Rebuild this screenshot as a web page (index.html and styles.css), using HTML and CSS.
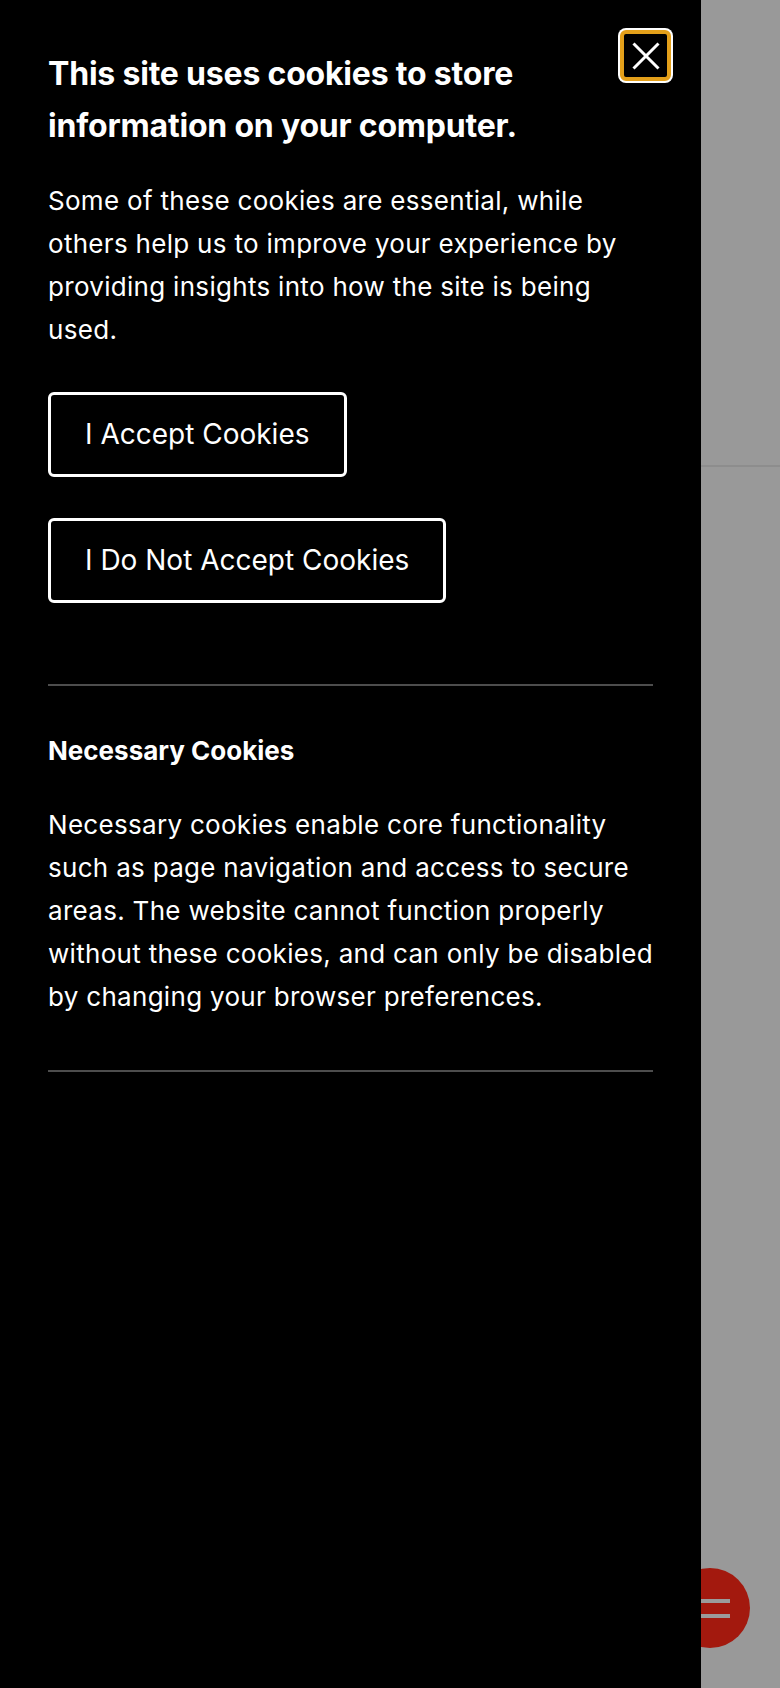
FILE: index.html
```html
<!DOCTYPE html>
<html lang="en">
<head>
<meta charset="utf-8">
<title>Cookies</title>
<link rel="stylesheet" href="styles.css">
</head>
<body>
<div class="page">
  <div class="page-rule"></div>
</div>
<button class="fab" aria-label="Menu">
  <span class="fab-line"></span>
  <span class="fab-line"></span>
</button>
<aside class="drawer">
  <button class="close" aria-label="Close">
    <svg viewBox="0 0 28 28" width="28" height="28"><path d="M1.5 1.5 L26.5 26.5 M26.5 1.5 L1.5 26.5" stroke="#fff" stroke-width="3" fill="none"/></svg>
  </button>
  <h1 class="title">This site uses cookies to store information on your computer.</h1>
  <p class="text">Some of these cookies are essential, while others help us to improve your experience by providing insights into how the site is being used.</p>
  <div class="actions">
    <button class="btn">I Accept Cookies</button>
    <button class="btn">I Do Not Accept Cookies</button>
  </div>
  <section class="group">
    <h2 class="group-title">Necessary Cookies</h2>
    <p class="text">Necessary cookies enable core functionality such as page navigation and access to secure areas. The website cannot function properly without these cookies, and can only be disabled by changing your browser preferences.</p>
  </section>
</aside>
</body>
</html>
```
FILE: styles.css
```css
html, body {
  margin: 0;
  padding: 0;
  height: 100%;
}
body {
  background: #999999;
  font-family: Inter, "Noto Sans", sans-serif;
  overflow: hidden;
}
.page {
  height: 100%;
  padding-top: 465px;
  box-sizing: border-box;
}
.page-rule {
  height: 2px;
  background: #8d8d8d;
}
.fab {
  position: fixed;
  left: 670px;
  top: 1568px;
  width: 80px;
  height: 80px;
  border-radius: 50%;
  border: 0;
  padding: 0;
  background: #a3190e;
  display: flex;
  flex-direction: column;
  align-items: center;
  justify-content: center;
  gap: 11px;
}
.fab-line {
  display: block;
  width: 40px;
  height: 4px;
  background: #9b9b9b;
}
.drawer {
  position: fixed;
  left: 0;
  top: 0;
  bottom: 0;
  width: 701px;
  background: #000;
  color: #fff;
  box-sizing: border-box;
  padding: 48px 48px 0 48px;
}
.close {
  position: absolute;
  left: 620px;
  top: 30px;
  width: 51px;
  height: 51px;
  box-sizing: border-box;
  border: 4px solid #e4a01a;
  border-radius: 6px;
  box-shadow: 0 0 0 2px #fff;
  background: #000;
  padding: 0;
  display: flex;
  align-items: center;
  justify-content: center;
}
.close svg {
  display: block;
}
.title {
  margin: 0;
  font-size: 32px;
  line-height: 52px;
  font-weight: 700;
  letter-spacing: -0.2px;
  padding-right: 60px;
}
.text {
  margin: 27px 0 0 0;
  font-size: 26px;
  line-height: 43px;
  font-weight: 400;
  letter-spacing: 0.3px;
}
.actions {
  display: flex;
  flex-direction: column;
  align-items: flex-start;
  gap: 41px;
  margin-top: 41px;
  padding-bottom: 81px;
  border-bottom: 2px solid #4d4d4d;
}
.btn {
  font-family: inherit;
  font-size: 28px;
  line-height: 35px;
  color: #fff;
  background: #000;
  border: 3px solid #fff;
  border-radius: 6px;
  padding: 22px 34px;
}
.group {
  padding-top: 43px;
  padding-bottom: 52px;
  border-bottom: 2px solid #4d4d4d;
}
.group-title {
  margin: 0;
  font-size: 26px;
  line-height: 43px;
  font-weight: 700;
}
.group .text {
  margin-top: 31px;
}
```
